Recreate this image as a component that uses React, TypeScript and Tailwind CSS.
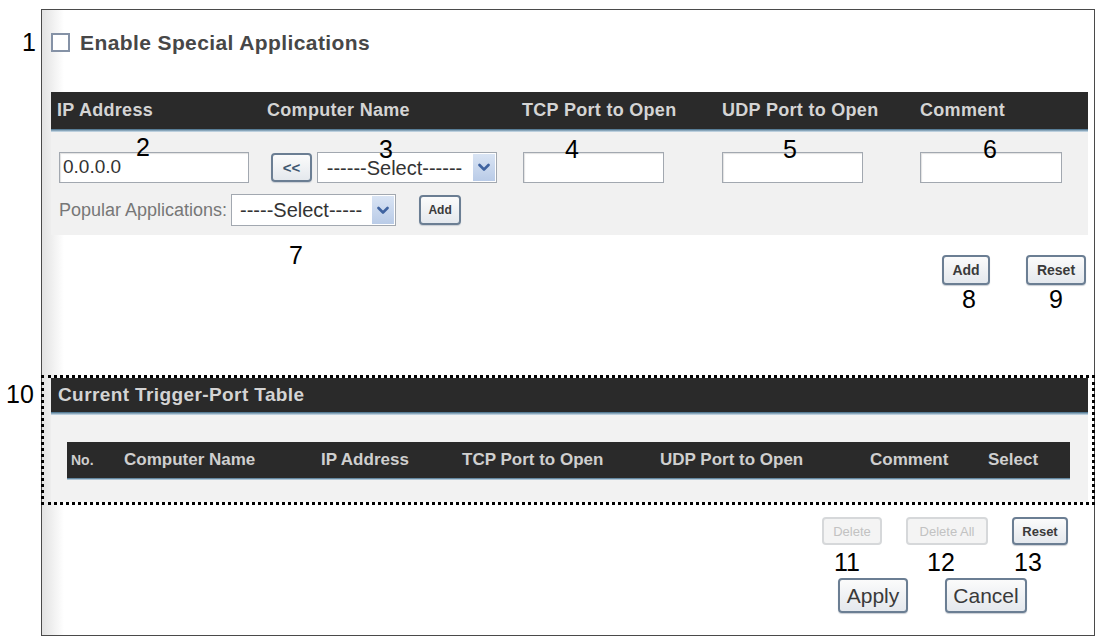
import type React from "react"

// Drop-down arrow on the right of each select box
const Chevron = () => (
  <svg width="12" height="9" viewBox="0 0 12 9" className="block">
    <path d="M1.5 2 L6 6.5 L10.5 2" fill="none" stroke="#3f63a0" strokeWidth="2.6" strokeLinecap="round" strokeLinejoin="round" />
  </svg>
)

const TextBox = ({ value = "", className = "" }: { value?: string; className?: string }) => (
  <div
    className={`flex h-[31px] items-center border border-[#a2a8b0] bg-white pl-[3px] text-[19px] text-[#333] shadow-[inset_1px_1px_1px_#e2e2e2] ${className}`}
  >
    {value}
  </div>
)

const SelectBox = ({ label, className = "" }: { label: string; className?: string }) => (
  <div className={`flex h-[31px] items-stretch border border-[#a2a8b0] bg-white ${className}`}>
    <span className="flex flex-1 items-center justify-center pr-[2px] text-[20px] leading-none text-[#333]">{label}</span>
    <span className="my-[1px] mr-[1px] flex w-[22px] items-center justify-center bg-[linear-gradient(#d9e4f4,#b9cbe7)]">
      <Chevron />
    </span>
  </div>
)

const Btn = ({
  children,
  disabled = false,
  className = "",
}: {
  children: React.ReactNode
  disabled?: boolean
  className?: string
}) => (
  <button
    type="button"
    className={`flex items-center justify-center rounded-[4px] border-2 leading-none ${
      disabled
        ? "border-[#d6d8da] bg-[#f4f4f4] text-[#c2c2c2]"
        : "border-[#6b7e93] bg-[linear-gradient(#fbfbfb,#e4e8ed)] text-[#3a3a3a] shadow-[0_1px_1px_#c9ced4]"
    } ${className}`}
  >
    {children}
  </button>
)

// Numbered callouts laid over the form
const callouts: { n: string; x: number; y: number }[] = [
  { n: "1", x: 22, y: 30 },
  { n: "2", x: 136, y: 135 },
  { n: "3", x: 379, y: 137 },
  { n: "4", x: 565, y: 137 },
  { n: "5", x: 783, y: 137 },
  { n: "6", x: 983, y: 137 },
  { n: "7", x: 289, y: 243 },
  { n: "8", x: 962, y: 287 },
  { n: "9", x: 1049, y: 287 },
  { n: "10", x: 6, y: 382 },
  { n: "11", x: 834, y: 550 },
  { n: "12", x: 927, y: 550 },
  { n: "13", x: 1014, y: 550 },
]

export default function App() {
  return (
    <div className="relative h-[643px] w-[1104px] overflow-hidden bg-white font-['Liberation_Sans',Arial,sans-serif]">
      <div className="ml-[41px] mt-[9px] flex h-[627px] w-[1054px] flex-col border border-[#4a4a4a] bg-[linear-gradient(to_right,#e2e2e2,#ffffff_22px)] pl-[9px] pr-[6px]">
        {/* enable toggle */}
        <div className="mt-[22px] flex h-[21px] items-center gap-[10px]">
          <span className="h-[19px] w-[19px] border-2 border-[#8592a6] bg-white" />
          <span className="text-[21px] font-bold tracking-[0.4px] text-[#474747]">Enable Special Applications</span>
        </div>

        {/* entry table header */}
        <div className="mt-[39px] grid h-[37px] grid-cols-[210px_255px_200px_198px_1fr] items-center bg-[#2a2a2a] pl-[6px] text-[18px] font-bold tracking-[0.3px] text-[#d4d4d4]">
          <span>IP Address</span>
          <span>Computer Name</span>
          <span>TCP Port to Open</span>
          <span>UDP Port to Open</span>
          <span>Comment</span>
        </div>
        <div className="h-[3px] bg-[linear-gradient(#3f6985,#d3e2ee)]" />

        <div className="h-[103px] bg-[#f1f1f1] pt-[20px]">
          <div className="grid grid-cols-[210px_255px_200px_198px_1fr] pl-[6px]">
            <TextBox value="0.0.0.0" className="ml-[2px] w-[190px]" />
            <div className="flex items-center">
              <Btn className="ml-[4px] h-[29px] w-[41px] text-[15px] font-bold text-[#3d5670]">&lt;&lt;</Btn>
              <SelectBox label="------Select------" className="ml-[5px] w-[180px]" />
            </div>
            <TextBox className="ml-[1px] w-[141px]" />
            <TextBox className="w-[141px]" />
            <TextBox className="w-[142px]" />
          </div>
          <div className="mt-[11px] flex h-[32px] items-center pl-[8px]">
            <span className="text-[18px] text-[#777]">Popular Applications:</span>
            <SelectBox label="-----Select-----" className="ml-[4px] h-[32px] w-[165px]" />
            <Btn className="ml-[23px] h-[30px] w-[42px] text-[12px] font-bold">Add</Btn>
          </div>
        </div>

        <div className="flex h-[140px] justify-end gap-[36px] pr-[2px] pt-[20px]">
          <Btn className="h-[30px] w-[48px] text-[14px] font-bold">Add</Btn>
          <Btn className="h-[30px] w-[60px] text-[14px] font-bold">Reset</Btn>
        </div>

        {/* current trigger-port table */}
        <div className="-ml-[10px] -mr-[7px] h-[130px] border-[3px] border-dotted border-black pl-[7px] pr-[4px]">
          <div className="flex h-[34px] items-center bg-[#2a2a2a] pl-[7px] text-[19px] font-bold tracking-[0.4px] text-[#d4d4d4]">
            Current Trigger-Port Table
          </div>
          <div className="h-[3px] bg-[linear-gradient(#3f6985,#d3e2ee)]" />
          <div className="h-[87px] bg-[#f2f2f2] pl-[16px] pr-[18px] pt-[27px]">
            <div className="grid h-[36px] grid-cols-[53px_197px_141px_198px_210px_118px_1fr] items-center bg-[#2a2a2a] pl-[4px] text-[17px] font-bold text-[#cfcfcf]">
              <span className="text-[14px]">No.</span>
              <span>Computer Name</span>
              <span>IP Address</span>
              <span>TCP Port to Open</span>
              <span>UDP Port to Open</span>
              <span>Comment</span>
              <span>Select</span>
            </div>
            <div className="h-[2px] bg-[linear-gradient(#3f6985,#d3e2ee)]" />
          </div>
        </div>

        <div className="mt-[12px] flex justify-end gap-[24px] pr-[20px]">
          <Btn disabled className="h-[28px] w-[60px] text-[13px]">Delete</Btn>
          <Btn disabled className="h-[28px] w-[82px] text-[13px]">Delete All</Btn>
          <Btn className="h-[28px] w-[56px] text-[13px] font-bold">Reset</Btn>
        </div>

        <div className="mt-[33px] flex justify-end gap-[37px] pr-[61px]">
          <Btn className="h-[35px] w-[70px] text-[21px]">Apply</Btn>
          <Btn className="h-[35px] w-[82px] text-[21px]">Cancel</Btn>
        </div>
      </div>

      {callouts.map((c) => (
        <span
          key={c.n}
          className="absolute text-[25px] leading-none text-black"
          style={{ left: c.x, top: c.y }}
        >
          {c.n}
        </span>
      ))}
    </div>
  )
}
